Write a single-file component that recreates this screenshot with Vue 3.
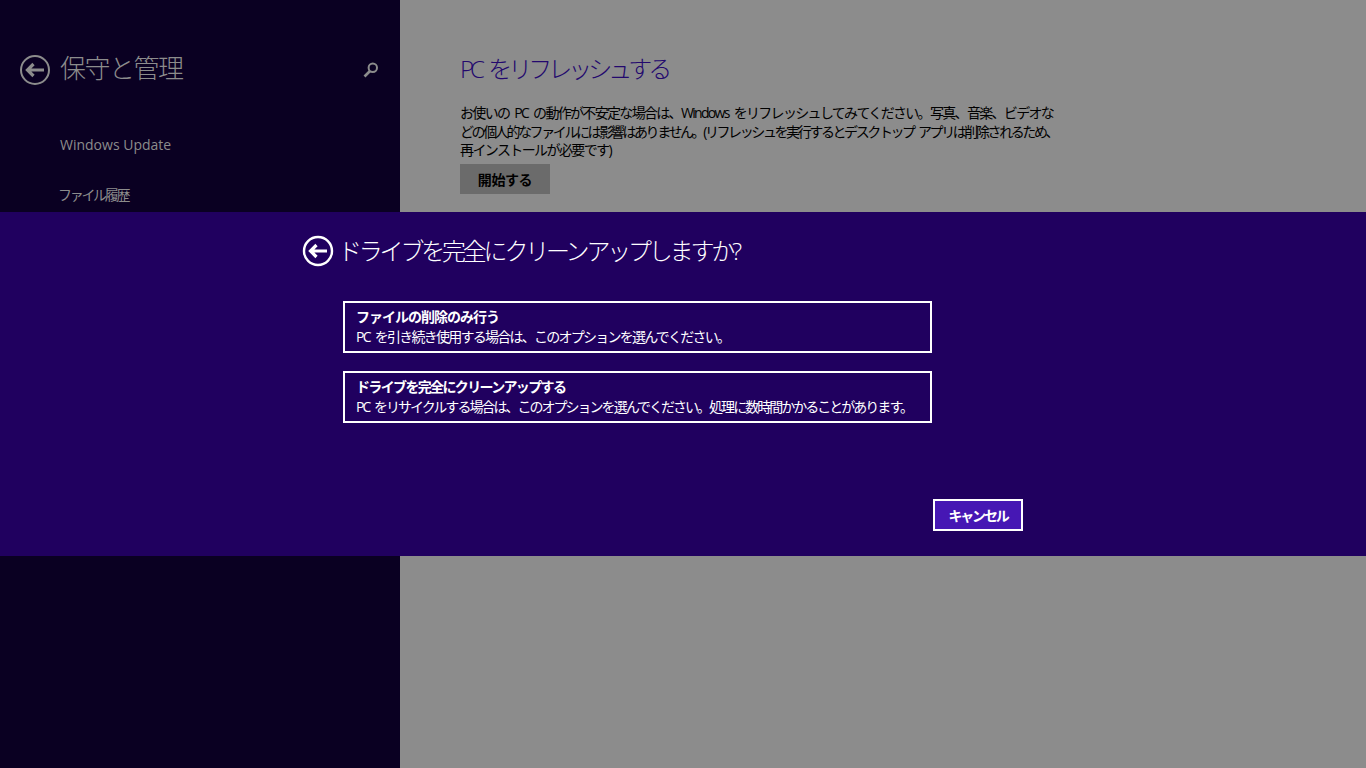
<template>
  <div class="screen">
    <aside class="side">
      <div class="side-head">
        <button class="back back-dim">
          <svg width="32" height="32" viewBox="0 0 32 32">
            <circle cx="16" cy="16" r="14" fill="none" stroke="currentColor" stroke-width="2" />
            <path d="M14.5 10 L8.5 16 L14.5 22 M9 16 H25" fill="none" stroke="currentColor" stroke-width="3.2" />
          </svg>
        </button>
        <h2 class="side-title">保守と管理</h2>
        <svg class="search" width="18" height="18" viewBox="0 0 18 18">
          <circle cx="10.8" cy="6.8" r="4.2" fill="none" stroke="currentColor" stroke-width="2" />
          <path d="M8 10 L2.5 15.5" stroke="currentColor" stroke-width="2.6" fill="none" />
        </svg>
      </div>
      <ul class="side-menu">
        <li>Windows Update</li>
        <li class="menu-jp">ファイル履歴</li>
      </ul>
    </aside>

    <main class="content">
      <h1 class="page-title">PC をリフレッシュする</h1>
      <div class="desc">
        <p class="line-a">お使いの PC の動作が不安定な場合は、Windows をリフレッシュしてみてください。写真、音楽、ビデオな</p>
        <p class="line-b">どの個人的なファイルには影響はありません。(リフレッシュを実行するとデスクトップ アプリは削除されるため、</p>
        <p class="line-c">再インストールが必要です)</p>
      </div>
      <button class="start">開始する</button>
    </main>

    <section class="dialog">
      <div class="dialog-head">
        <button class="back back-light">
          <svg width="32" height="32" viewBox="0 0 32 32">
            <circle cx="16" cy="16" r="14" fill="none" stroke="currentColor" stroke-width="2.4" />
            <path d="M14.5 10 L8.5 16 L14.5 22 M9 16 H25" fill="none" stroke="currentColor" stroke-width="3.2" />
          </svg>
        </button>
        <h2 class="dialog-title">ドライブを完全にクリーンアップしますか?</h2>
      </div>
      <div class="options">
        <button v-for="opt in options" :key="opt.title" class="option">
          <strong :style="{ letterSpacing: opt.titleSpacing }">{{ opt.title }}</strong>
          <span :style="{ letterSpacing: opt.textSpacing }">{{ opt.text }}</span>
        </button>
      </div>
      <div class="actions">
        <button class="cancel">キャンセル</button>
      </div>
    </section>
  </div>
</template>

<script setup>
const options = [
  {
    title: 'ファイルの削除のみ行う',
    text: 'PC を引き続き使用する場合は、このオプションを選んでください。',
    titleSpacing: '-1px',
    textSpacing: '-1.75px'
  },
  {
    title: 'ドライブを完全にクリーンアップする',
    text: 'PC をリサイクルする場合は、このオプションを選んでください。処理に数時間かかることがあります。',
    titleSpacing: '-1.65px',
    textSpacing: '-1.98px'
  }
];
</script>

<style scoped>
.screen {
  position: relative;
  display: flex;
  width: 1366px;
  height: 768px;
  overflow: hidden;
  background: #8c8c8c;
  font-family: "Open Sans", "Noto Sans CJK JP", sans-serif;
}

button {
  font-family: inherit;
  border: none;
  background: none;
  padding: 0;
}

.side {
  flex: 0 0 400px;
  background: #0a0022;
  color: #8c8c8c;
  box-sizing: border-box;
  padding: 54px 20px 0 19px;
}

.side-head {
  display: flex;
  align-items: center;
  height: 32px;
}

.back {
  display: flex;
  width: 32px;
  height: 32px;
  margin-right: 9px;
}

.back-dim {
  color: #8c8c8c;
}

.back-light {
  color: #fff;
  margin-right: 3px;
}

.side-title {
  flex: 1;
  margin: 0;
  padding-bottom: 6px;
  font-size: 26px;
  font-weight: 300;
  letter-spacing: -1.5px;
}

.search {
  color: #8c8c8c;
}

.side-menu {
  list-style: none;
  margin: 0;
  padding: 34px 0 0 41px;
  font-size: 14px;
}

.side-menu li {
  height: 50px;
  line-height: 50px;
}

.side-menu .menu-jp {
  margin-left: -2px;
  letter-spacing: -2.3px;
}

.content {
  flex: 1;
  padding: 51px 0 0 60px;
  color: #000;
}

.page-title {
  margin: 0;
  height: 36px;
  font-size: 24px;
  line-height: 36px;
  font-weight: 300;
  color: #23086e;
  letter-spacing: -4px;
  word-spacing: 5px;
}

.desc {
  margin-top: 17px;
  font-size: 14px;
  line-height: 18.5px;
  word-spacing: 3px;
  white-space: nowrap;
}

.desc p {
  margin: 0;
}

.line-a {
  letter-spacing: -1.68px;
}

.line-b {
  letter-spacing: -2.4px;
}

.line-c {
  letter-spacing: -1.6px;
}

.start {
  display: block;
  width: 90px;
  height: 30px;
  margin-top: 4.5px;
  background: #6b6b6b;
  color: #000;
  font-size: 14px;
  font-weight: 700;
  letter-spacing: -0.4px;
}

.dialog {
  position: absolute;
  left: 0;
  right: 0;
  top: 212px;
  height: 344px;
  box-sizing: border-box;
  padding: 23px 343px 0 302px;
  background: #20005f;
  color: #fff;
}

.dialog-head {
  display: flex;
  align-items: center;
  height: 32px;
}

.dialog-title {
  margin: 0 0 0 1px;
  padding-bottom: 4px;
  font-size: 24px;
  font-weight: 300;
  letter-spacing: -3.2px;
  white-space: nowrap;
}

.options {
  display: flex;
  flex-direction: column;
  gap: 18px;
  width: 589px;
  margin: 34px 0 0 41px;
}

.option {
  display: flex;
  flex-direction: column;
  box-sizing: border-box;
  height: 52px;
  padding: 5px 11px 0;
  border: 2px solid #fff;
  color: #fff;
  text-align: left;
  font-size: 14px;
  line-height: 18px;
}

.option span {
  margin-top: 2px;
  word-spacing: 3px;
  white-space: nowrap;
}

.actions {
  display: flex;
  justify-content: flex-end;
  margin-top: 76px;
  width: 721px;
}

.cancel {
  width: 90px;
  height: 32px;
  box-sizing: border-box;
  border: 2px solid #fff;
  background: #4617b4;
  color: #fff;
  font-size: 14px;
  font-weight: 700;
  letter-spacing: -2.2px;
}
</style>
